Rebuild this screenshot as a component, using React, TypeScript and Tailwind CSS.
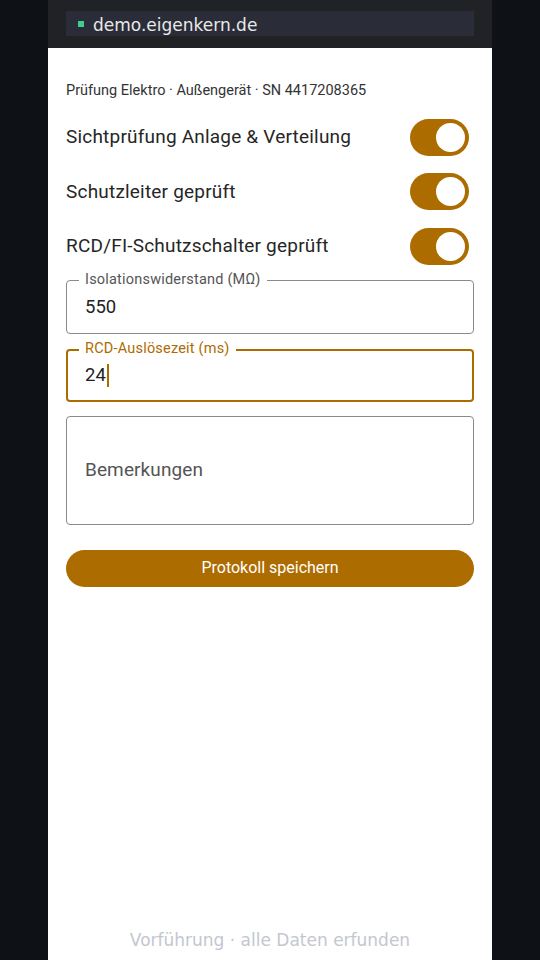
import React, { useState } from 'react'

const checks = [
    "Sichtprüfung Anlage & Verteilung",
    "Schutzleiter geprüft",
    "RCD/FI-Schutzschalter geprüft",
]

const Toggle = ({ on, onClick }: { on: boolean, onClick: () => void }) => (
    <button
        onClick={onClick}
        className={`relative w-[59px] h-[37px] rounded-full shrink-0 ${on ? "bg-[#ad6c00]" : "bg-gray-300"}`}
    >
        <span className={`absolute top-[4px] w-[29px] h-[29px] rounded-full bg-white ${on ? "left-[26px]" : "left-[4px]"}`} />
    </button>
)

const App = () => {
    const [toggles, setToggles] = useState([true, true, true])

    return (
        <div className="w-[540px] h-[960px] bg-[#0e1216] flex justify-center" style={{ fontFamily: "Roboto, 'Noto Sans', sans-serif" }}>
            <div className="w-[444px] h-full bg-white flex flex-col">
                <div className="h-[48px] bg-[#202226] px-[18px] pt-[11px]">
                    <div className="h-[25px] bg-[#2a2d37] flex items-center pl-[12px] gap-[9px]">
                        <span className="w-[6px] h-[6px] bg-[#3ecf8e]" />
                        <span className="text-[17px] leading-[20px] text-[#e8e8ea] pt-[2px]" style={{ fontFamily: "'DejaVu Sans', sans-serif" }}>demo.eigenkern.de</span>
                    </div>
                </div>

                <div className="flex flex-col px-[18px]">
                    <div className="text-[14.5px] text-[#333] mt-[35px] leading-[16px]">Prüfung Elektro · Außengerät · SN 4417208365</div>

                    <div className="flex flex-col mt-[11px]">
                        {checks.map((label, i) => (
                            <div key={i} className="flex items-center justify-between h-[54.5px] pr-[5px]">
                                <span className="text-[19px] leading-[22px] tracking-[0.2px] text-[#262626]">{label}</span>
                                <Toggle on={toggles[i]} onClick={() => setToggles(toggles.map((t, j) => j === i ? !t : t))} />
                            </div>
                        ))}
                    </div>

                    <div className="relative mt-[6px] h-[54px] border border-[#8a8a8a] rounded-[4px] flex items-center px-[18px]">
                        <span className="absolute -top-[9px] left-[12px] bg-white px-[6px] text-[14.5px] leading-[16px] tracking-[0.2px] text-[#555]">Isolationswiderstand (MΩ)</span>
                        <span className="text-[18.5px] leading-[22px] text-[#222] pt-[1px]">550</span>
                    </div>

                    <div className="relative mt-[15px] h-[53px] border-2 border-[#ad6c00] rounded-[4px] flex items-center px-[17px]">
                        <span className="absolute -top-[10px] left-[11px] bg-white px-[6px] text-[14.5px] leading-[16px] tracking-[0.2px] text-[#ad6c00]">RCD-Auslösezeit (ms)</span>
                        <span className="text-[18.5px] leading-[22px] text-[#222] flex items-center">24<span className="w-[2px] h-[23px] bg-[#ad6c00] ml-[1px]" /></span>
                    </div>

                    <div className="mt-[14px] h-[109px] border border-[#8a8a8a] rounded-[4px] flex items-center px-[18px]">
                        <span className="text-[19px] leading-[22px] tracking-[0.1px] text-[#555]">Bemerkungen</span>
                    </div>

                    <button className="mt-[25px] h-[37px] rounded-full bg-[#ad6c00] text-white text-[16px]">Protokoll speichern</button>
                </div>

                <div className="mt-auto mb-[7px] text-center text-[17px] text-[#c3c7cf]" style={{ fontFamily: "'DejaVu Sans', sans-serif" }}>Vorführung · alle Daten erfunden</div>
            </div>
        </div>
    )
}

export default App
